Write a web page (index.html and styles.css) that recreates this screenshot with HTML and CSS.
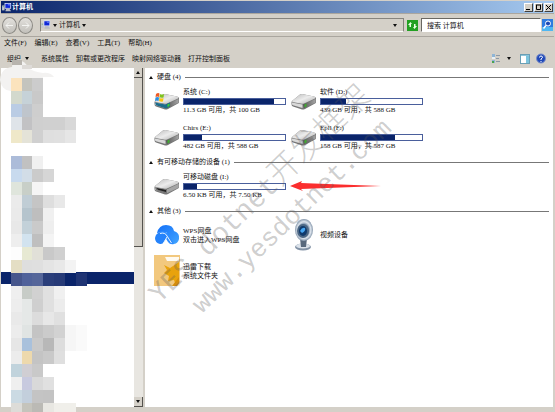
FILE: index.html
```html
<!DOCTYPE html>
<html lang="zh-CN">

<head>
    <meta charset="UTF-8">
    <meta name="viewport" content="width=device-width, initial-scale=1.0">
    <title>计算机</title>
    <link rel="stylesheet" href="styles.css">
</head>

<body>
    <!-- shared drawings -->
    <svg class="defs" width="0" height="0">
        <defs>
            <linearGradient id="topFace" x1="0" y1="0" x2="1" y2="1">
                <stop offset="0" stop-color="#b9b9b9" />
                <stop offset="0.5" stop-color="#ececec" />
                <stop offset="1" stop-color="#a9a9a9" />
            </linearGradient>
            <linearGradient id="sideFace" x1="0" y1="0" x2="1" y2="0">
                <stop offset="0" stop-color="#555" />
                <stop offset="1" stop-color="#a5a5a5" />
            </linearGradient>
            <linearGradient id="cloudBlue" x1="0" y1="0" x2="1" y2="1">
                <stop offset="0" stop-color="#1470f8" />
                <stop offset="1" stop-color="#42a5ff" />
            </linearGradient>
            <radialGradient id="camRing">
                <stop offset="0.5" stop-color="#6f87a3" />
                <stop offset="0.75" stop-color="#dfe6ee" />
                <stop offset="1" stop-color="#8496aa" />
            </radialGradient>
            <symbol id="drive" viewBox="0 0 26 18">
                <path d="M1 9 L9 2.5 Q10 2 11 2 L23 4.5 Q25 5 25 6.5 V10 Q25 11 24 11.5 L14 17 Q12.500 17.800 11 17.500 L2 14.500 Q0.500 14 0.500 12 V10 Z" fill="#777" />
                <path d="M1 9 L9 2.5 Q10 2 11 2 L23 4.5 Q25 5 24 6.500 L13 11.500 Q12 12 11 11.800 L1.500 10 Z" fill="url(#topFace)" />
                <path d="M1 10.500 L11.500 12.500 V16 L2 13.300 Q1 13 1 12 Z" fill="#d9d9d9" />
                <path d="M12 12.500 L24.500 7 V10.500 L13 16.300 Z" fill="url(#sideFace)" />
                <path d="M13.500 12.500 L15.500 11.500 V14.500 L13.500 15.500 Z" fill="#3fae2e" />
            </symbol>
            <symbol id="pc" viewBox="0 0 12 11">
                <rect x="3" y="0" width="8" height="7" fill="#d8dff5" />
                <rect x="4" y="1" width="6" height="5" fill="#1128d6" />
                <rect x="7" y="1" width="3" height="2" fill="#5872f2" />
                <path d="M5 7 H9 L11 10 H4 Z" fill="#b9bcc4" />
                <rect x="0" y="3" width="3" height="6" fill="#c3c8cf" />
                <rect x="1" y="4" width="1" height="1" fill="#4b9c55" />
            </symbol>
        </defs>
    </svg>

    <div class="window">
        <header class="titlebar">
            <svg width="10" height="9"><use href="#pc" /></svg>
            <h1>计算机</h1>
            <div class="win-buttons">
                <button type="button" aria-label="最小化"><svg width="7" height="7"><path d="M1 5.500 H5" stroke="#000" /></svg></button>
                <button type="button" aria-label="最大化"><svg width="7" height="7"><path d="M1 1 H6 M1.500 1 V5.500 H5.500 V1" stroke="#000" fill="none" /></svg></button>
                <button type="button" aria-label="关闭"><svg width="7" height="7"><path d="M1 1 L6 6 M6 1 L1 6" stroke="#000" /></svg></button>
            </div>
        </header>

        <div class="navbar">
            <div class="history">
                <button type="button" aria-label="后退"><svg width="9" height="9"><path d="M8 4.500 H1 M4 1.500 L1 4.500 L4 7.500" stroke="#f4f4f2" fill="none" /></svg></button>
                <button type="button" aria-label="前进"><svg width="9" height="9"><path d="M1 4.500 H8 M5 1.500 L8 4.500 L5 7.500" stroke="#f4f4f2" fill="none" /></svg></button>
            </div>
            <div class="address">
                <svg width="10" height="10"><use href="#pc" /></svg>
                <i class="arrow"></i>
                <span>计算机</span>
                <i class="arrow"></i>
                <i class="arrow last"></i>
            </div>
            <button type="button" class="refresh" aria-label="刷新">
                <svg width="11" height="11"><rect width="11" height="11" fill="#22a022" /><path d="M1 5 L3.500 2 L5 4 H4 V7 H2.500 V5 Z M10 6 L7.500 9 L6 7 H7 V4 H8.500 V6 Z" fill="#e9ffe5" /></svg>
            </button>
            <input type="text" class="search" value="搜索 计算机" aria-label="搜索">
            <button type="button" class="go" aria-label="搜索">
                <svg width="11" height="12"><rect width="11" height="12" fill="#2f7be0" /><rect y="8" width="11" height="4" fill="#4fb7f2" /><circle cx="6" cy="4.500" r="2.500" fill="#1c49b4" stroke="#fff" /><path d="M4 6.500 L1.500 9.500" stroke="#fff" stroke-width="1.500" /></svg>
            </button>
        </div>

        <nav class="menu">
            <button type="button">文件(F)</button>
            <button type="button">编辑(E)</button>
            <button type="button">查看(V)</button>
            <button type="button">工具(T)</button>
            <button type="button">帮助(H)</button>
        </nav>

        <div class="toolbar">
            <button type="button" class="organize">组织 <i class="arrow"></i></button>
            <button type="button">系统属性</button>
            <button type="button">卸载或更改程序</button>
            <button type="button">映射网络驱动器</button>
            <button type="button">打开控制面板</button>
            <div class="view-tools">
                <button type="button" aria-label="视图">
                    <svg width="10" height="11"><path d="M1 1 H4 V4 H1 Z M1 7 H4 V10 H1 Z" fill="#8fb5d6" /><path d="M1 4 H4 V6 H1 Z" fill="#e8f0f6" /><rect x="1" y="8" width="2" height="2" fill="#4ba34f" /><path d="M5 2.500 H9 M5 5.500 H8 M5 8.500 H9" stroke="#8d99a6" /></svg>
                    <i class="arrow"></i>
                </button>
                <button type="button" aria-label="预览窗格">
                    <svg width="10" height="10"><rect x="0.500" y="0.500" width="9" height="9" fill="#fff" stroke="#6a9fb5" /><rect x="6" y="1" width="3" height="8" fill="#7cc4dd" /><path d="M1 1.500 H9" stroke="#8ec5da" /></svg>
                </button>
                <button type="button" aria-label="帮助">
                    <svg width="10" height="11"><circle cx="5" cy="5.500" r="4.500" fill="#2149b8" stroke="#7b8fc8" /><path d="M3.500 4.500 Q3.500 3 5 3 Q6.500 3 6.500 4.300 Q6.500 5 5 6 V7 M5 8 V9" stroke="#fff" fill="none" /></svg>
                </button>
            </div>
        </div>

        <div class="panes">
            <aside class="tree">
                <div class="tree-list">
                    <div class="selected"></div>
                </div>
                <svg class="mosaic" id="mosaic" width="90" height="352">
                    <path d="M12 7 Q12 0 18 0 Q26 1 28 8 Q34 12 43 13 Q50 12 54 17 H43 V24 H11 V31 Q2 31 0 20 Q1 8 12 7 Z" fill="#f3f2f1" />
                    <path d="M12 0 H22 V5 H12 Z" fill="#b8b4ae" />
                    <path d="M22 5 H32 V9 H22 Z" fill="#dedbd8" />
                </svg>
                <div class="scrollbar">
                    <button type="button" aria-label="向上"><i class="arrow up"></i></button>
                    <div class="track"><div class="thumb"></div></div>
                    <button type="button" aria-label="向下"><i class="arrow"></i></button>
                </div>
            </aside>

            <main class="content">
                <section>
                    <h2><i class="arrow up"></i>硬盘 (4)</h2>
                    <ul class="items">
                        <li>
                            <svg width="26" height="18">
                                <use href="#drive" />
                                <path d="M1 10.500 L11.500 12.500 L16 10.500 V14.500 L12 16.500 L2 13.300 Z" fill="#1c6c8c" />
                                <path d="M13.500 12.500 L15.500 11.500 V14 L13.500 15 Z" fill="#3fd02e" />
                                <path d="M2 2 Q4 0.500 5.500 1.500 L5 5 Q3.500 4 1.500 5 Z" fill="#ee5a24" />
                                <path d="M6 2 Q8 3 10 2 L9.500 5.500 Q7.500 6 5.500 5 Z" fill="#7fc31c" />
                                <path d="M1.500 5.500 Q3.500 4.500 5 5.500 L4.500 9 Q3 8 1 9 Z" fill="#2b8fe0" />
                                <path d="M5.500 6 Q7.500 7 9.500 6 L9 9.500 Q7 10 5 9 Z" fill="#fdc60b" />
                            </svg>
                            <div class="info">
                                <p>系统 (C:)</p>
                                <div class="bar"><span style="width: 89%"></span></div>
                                <p>11.3 GB 可用，共 100 GB</p>
                            </div>
                        </li>
                        <li>
                            <svg width="26" height="18"><use href="#drive" /></svg>
                            <div class="info">
                                <p>软件 (D:)</p>
                                <div class="bar"><span style="width: 25%"></span></div>
                                <p>439 GB 可用，共 588 GB</p>
                            </div>
                        </li>
                        <li>
                            <svg width="26" height="18"><use href="#drive" /></svg>
                            <div class="info">
                                <p>Chirs (E:)</p>
                                <div class="bar"><span style="width: 18%"></span></div>
                                <p>482 GB 可用，共 588 GB</p>
                            </div>
                        </li>
                        <li>
                            <svg width="26" height="18"><use href="#drive" /></svg>
                            <div class="info">
                                <p>Epll (F:)</p>
                                <div class="bar"><span style="width: 73%"></span></div>
                                <p>158 GB 可用，共 587 GB</p>
                            </div>
                        </li>
                    </ul>
                </section>

                <section>
                    <h2><i class="arrow up"></i>有可移动存储的设备 (1)</h2>
                    <ul class="items">
                        <li class="removable">
                            <svg width="26" height="18">
                                <use href="#drive" />
                                <path d="M1 10.500 L11.500 12.500 L13 12 V16.300 L11 16.500 L2 13.300 Z" fill="#777" />
                                <path d="M2.500 11 L12 13 V15 L4 12.800 Z" fill="#222" />
                                <path d="M13 12.200 L24.500 7 V10.500 L13 16.300 Z" fill="#a5a5a5" />
                            </svg>
                            <div class="info">
                                <p>可移动磁盘 (I:)</p>
                                <div class="bar"><span style="width: 13%"></span></div>
                                <p>6.50 KB 可用，共 7.50 KB</p>
                            </div>
                            <svg class="pointer" width="92" height="10"><path d="M0 5 L12 0 L11 2 Q50 3.500 91 5 Q50 6.500 11 8 L13 10 Z" fill="#fb2e2e" /></svg>
                        </li>
                    </ul>
                </section>

                <section>
                    <h2><i class="arrow up"></i>其他 (3)</h2>
                    <ul class="items">
                        <li>
                            <svg width="26" height="22">
                                <path d="M3 9 Q5 1 12 1 Q19 1 20 7 Q26 9 25 15 Q24 20 19 20 L12 8 Z" fill="url(#cloudBlue)" />
                                <path d="M5 8 Q11 6 14 10 L20 20 Q16 21 14 18 L11 13 Z" fill="#2f8dff" />
                                <path d="M6 20 Q1 19 1 14 Q2 8 8 9 Q11 9 13 13 L10 18 Q8.500 20.500 6 20 Z" fill="#2583fb" />
                                <path d="M6 9.500 Q11 8 13 12 L17.500 19 M13 13 L9.500 19" stroke="#e8f4ff" fill="none" />
                            </svg>
                            <div class="info">
                                <p>WPS网盘</p>
                                <p>双击进入WPS网盘</p>
                            </div>
                        </li>
                        <li>
                            <svg width="26" height="32">
                                <ellipse cx="12" cy="28" rx="8" ry="3.500" fill="#8292a5" />
                                <ellipse cx="12" cy="27" rx="7" ry="2.500" fill="#dbe2ea" />
                                <path d="M9 19 H16 L15 28 H10 Z" fill="#58697d" />
                                <ellipse cx="13" cy="11" rx="9" ry="11" fill="url(#camRing)" />
                                <ellipse cx="12" cy="12" rx="6" ry="7" fill="#4c6784" />
                                <ellipse cx="12" cy="12" rx="4" ry="5" fill="#0f3a6c" />
                                <path d="M9 12 Q11 8 14 9 Q15 12 11 14 Z" fill="#46a6f2" />
                            </svg>
                            <div class="info">
                                <p>视频设备</p>
                            </div>
                        </li>
                        <li>
                            <svg width="26" height="32">
                                <rect width="26" height="31" fill="#f2c87e" />
                                <path d="M11 2 H25 V6 H13 Z" fill="#fffaf0" />
                                <path d="M10 10 L16 13 L25 7 V30 Q21 30 20 25 L14 26 L15 21 L10 18 L13 15 Z" fill="#e8a20c" />
                                <path d="M25 22 V31 H18 Z" fill="#d48d0a" />
                                <path d="M23 31 L26 27 V31 Z" fill="#fff3da" />
                            </svg>
                            <div class="info">
                                <p>迅雷下载</p>
                                <p>系统文件夹</p>
                            </div>
                        </li>
                    </ul>
                </section>
            </main>
        </div>
    </div>

    <p class="watermark first">YES dotnet<span>开发框架</span></p>
    <p class="watermark second">www.yesdotnet.com</p>

    <script>
        // one row of tiles per entry, left to right
        const rows = [
            "fbe3bd c4c4be cccccc",
            "d3d9cd c6d2d8 c9c9c9",
            "bacce4 bfc5cc cecece",
            "dfe4e9 c2c2c4 cfcfcf d0d0d0 d0d0d0 d8d8d8",
            "efe8c9 e4e3d8 d0d0d0 dfdfdf e0e0e0 e6e6e6",
            "",
            "acbcd9 c1c1c1 f0f0f0",
            "c8daee d2dde7 cbcbcb d6d6d6",
            "dfe5dc c8cfc8 f5f5f5",
            "ebebeb c0cdd5 c5c5c5 dedede e8e8e8",
            "eaeaea b5c4cd bebebe f0f0f0",
            "e8e8e8 c3d1d9 cacaca eeeeee",
            "eeeeee d2e3ef bfbfbf f4f4f4",
            "fdfdfd e7e9d3 e1e0d8 c9c9c9 d0d0d0",
            "e4dec4 dedede dfdfdf e4e4e4 e8e8e8 f3f3f3",
            "46568c 50629a 55669a 2a3e7a 263a77 0a246a 1f3474",
            "efefef c7ccc7 d1d1d1 e0e0e0 f0f0f0",
            "ededed e5e8e7 cfcfcf e0e0e0 ececec",
            "e9e9e9 e5e8e7 dcdcdc e7e7e7 e0e0e0",
            "ececec e0e4e3 c4c4c4 cbcbcb d2d2d2 f6f6f6 fafafa",
            "e6e6e6 a9c1dc c9c9c9 b8b8b8 dddddd f6f6f6 fafafa",
            "ececec edd9ad c4c4c4 c9c9c9 dfdfdf",
            "c1d3dc d0ced3 c9c9c9",
            "efefef c8cadf d9d9d9 e0e0e0",
            "cbdae3 c3cfdc c4c4c4 c3c3c3",
            "dddcd8 c5c4bc bbbab5 e8e7e2 f0efea f0efea"
        ];
        const lefts = [11, 22, 32, 43, 54, 65, 76, 87];
        const mosaic = document.getElementById("mosaic");

        rows.forEach(function (row, r) {
            row.split(" ").filter(Boolean).forEach(function (color, c) {
                const tile = document.createElementNS("http://www.w3.org/2000/svg", "rect");
                tile.setAttribute("x", lefts[c]);
                tile.setAttribute("y", 18 + r * 13);
                tile.setAttribute("width", lefts[c + 1] - lefts[c]);
                tile.setAttribute("height", 13);
                tile.setAttribute("fill", "#" + color);
                mosaic.appendChild(tile);
            });
        });
    </script>
</body>

</html>
```

FILE: styles.css
```css
* {
    box-sizing: border-box;
}

body {
    margin: 0;
    position: relative;
    overflow: hidden;
    background-color: #d4d0c8;
    color: #111;
    font-family: "Liberation Serif", "Noto Sans CJK SC", serif;
    font-size: 7px;
    line-height: 10px;
}

h1,
h2,
p,
ul {
    margin: 0;
    padding: 0;
    font-size: 7px;
    font-weight: normal;
}

button {
    margin: 0;
    padding: 0;
    border: none;
    background: none;
    color: inherit;
    font: inherit;
    white-space: nowrap;
}

svg {
    display: block;
    flex: none;
}

.defs {
    position: absolute;
}

.window {
    display: flex;
    flex-direction: column;
    height: 100vh;
    padding: 1px 1px 0;
}

.arrow {
    flex: none;
    border: 2px solid transparent;
    border-top: 3px solid #111;
    border-bottom: none;
}

.arrow.up {
    border-top: none;
    border-bottom: 3px solid #111;
}

/* title bar */
.titlebar {
    display: flex;
    align-items: center;
    height: 12px;
    padding: 0 1px;
    background: linear-gradient(to right, #0a246a, #a6caf0);
    color: #fff;
}

.titlebar h1 {
    font-weight: bold;
}

.win-buttons {
    display: flex;
    gap: 1px;
    margin-left: auto;
}

.win-buttons button {
    width: 9px;
    height: 9px;
    border: 1px solid #404040;
    border-top-color: #fff;
    border-left-color: #fff;
    background-color: #d4d0c8;
}

/* address row */
.navbar {
    display: flex;
    align-items: center;
    height: 24px;
    border-top: 1px solid #aaa69f;
    border-bottom: 1px solid #aaa69f;
}

.history {
    display: flex;
    gap: 1px;
    width: 39px;
    padding-left: 1px;
}

.history button {
    display: flex;
    align-items: center;
    justify-content: center;
    width: 15px;
    height: 17px;
    border: 1px solid #8b8984;
    border-radius: 50%;
    background: linear-gradient(#e2e0dc, #c2c0bb);
}

.address {
    display: flex;
    flex: 1;
    align-items: center;
    gap: 2px;
    height: 14px;
    border: 1px solid #87847e;
    border-bottom-color: #fff;
}

.address .last {
    margin-left: auto;
    margin-right: 6px;
}

.refresh {
    margin: 0 3px;
}

.search {
    width: 120px;
    height: 14px;
    padding: 0 5px;
    border: 1px solid #6a6863;
    border-right-color: #fff;
    border-bottom-color: #fff;
    border-radius: 0;
    background-color: #fff;
    color: #111;
    font: inherit;
}

.go {
    margin: 0 1px;
}

/* menu and commands */
.menu {
    display: flex;
    align-items: center;
    gap: 8px;
    height: 12px;
    padding-left: 3px;
}

.toolbar {
    display: flex;
    align-items: center;
    gap: 7px;
    height: 19px;
    padding: 0 8px 0 6px;
}

.organize {
    display: flex;
    align-items: center;
    gap: 4px;
    width: 27px;
}

.view-tools {
    display: flex;
    align-items: center;
    gap: 6px;
    margin-left: auto;
}

.view-tools button {
    display: flex;
    align-items: center;
    gap: 6px;
}

.view-tools button:first-child {
    margin-right: 3px;
}

/* panes */
.panes {
    display: flex;
    flex: 1;
    margin-bottom: 5px;
    background-color: #fff;
}

.tree {
    position: relative;
    display: flex;
    width: 144px;
    border-right: 2px solid #d4d0c8;
}

.tree-list {
    flex: 1;
    padding-top: 204px;
}

.selected {
    height: 12px;
    background-color: #0a246a;
}

.mosaic {
    position: absolute;
    top: -8px;
    left: -1px;
}

.scrollbar {
    display: flex;
    flex-direction: column;
    width: 9px;
    background-color: #e8e6e1;
}

.scrollbar button {
    display: flex;
    align-items: center;
    justify-content: center;
    height: 10px;
    border-right: 1px solid #55534f;
    border-bottom: 1px solid #55534f;
    background-color: #d4d0c8;
}

.track {
    flex: 1;
}

.thumb {
    height: 53%;
    border-right: 1px solid #55534f;
    border-bottom: 1px solid #55534f;
    background-color: #d4d0c8;
}

.content {
    display: flex;
    flex: 1;
    flex-direction: column;
    gap: 4px;
    padding: 2px 4px 0;
    border-right: 1px solid #d4d0c8;
}

h2 {
    display: flex;
    align-items: center;
    gap: 4px;
    height: 14px;
}

h2::after {
    content: "";
    flex: 1;
    height: 1px;
    background-color: #777;
}

.items {
    display: grid;
    grid-template-columns: repeat(auto-fill, 137px);
    grid-auto-rows: 28px;
    row-gap: 8px;
    padding: 0 0 0 5px;
    margin-top: 3px;
    list-style: none;
}

.items li {
    display: flex;
    align-items: center;
    gap: 3px;
}

.info {
    flex: none;
    width: 103px;
    white-space: nowrap;
}

.info p + p {
    margin-top: -1px;
}

.bar {
    height: 7px;
    margin-top: 1px;
    border: 1px solid #4a5f9c;
    background-color: #fff;
}

.bar span {
    display: block;
    height: 100%;
    background-color: #0a246a;
}

.pointer {
    margin-left: 1px;
}

/* slanted marks over the window */
.watermark {
    position: absolute;
    color: rgba(90, 90, 90, 0.3);
    font-family: "Liberation Mono", "Noto Sans CJK SC", monospace;
    line-height: 32px;
    white-space: nowrap;
    transform: rotate(-44deg);
    transform-origin: left center;
    pointer-events: none;
}

.first {
    top: 282px;
    left: 154px;
    font-size: 28px;
}

.first span {
    font-size: 32px;
    font-weight: 300;
}

.second {
    top: 293px;
    left: 197px;
    font-size: 26px;
}
```
